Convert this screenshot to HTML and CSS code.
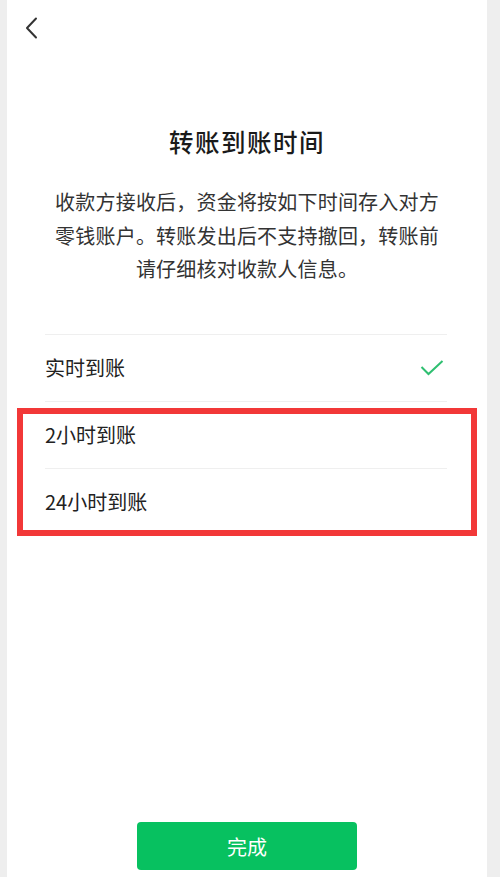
FILE: index.html
```html
<!DOCTYPE html>
<html lang="zh-CN">
<head>
<meta charset="utf-8">
<title>转账到账时间</title>
<link rel="stylesheet" href="styles.css">
</head>
<body>
<div class="frame">
  <div class="edge edge-left"></div>
  <main class="page">
    <header class="topbar">
      <svg class="back" width="14" height="22" viewBox="0 0 14 22" aria-hidden="true">
        <path d="M11 1.5 L2 11 L11 20.5" fill="none" stroke="#333" stroke-width="2" stroke-linecap="round" stroke-linejoin="round"/>
      </svg>
    </header>
    <h1 class="title">转账到账时间</h1>
    <p class="desc">收款方接收后，资金将按如下时间存入对方<br>零钱账户。转账发出后不支持撤回，转账前<br>请仔细核对收款人信息。</p>
    <ul class="options">
      <li class="option">
        <span>实时到账</span>
        <svg class="check" width="24" height="18" viewBox="0 0 24 18" aria-hidden="true">
          <path d="M1.5 8 L8.5 15 L22.5 2" fill="none" stroke="#2fbf71" stroke-width="2"/>
        </svg>
      </li>
      <li class="highlight">
        <div class="option"><span>2小时到账</span></div>
        <div class="option"><span>24小时到账</span></div>
      </li>
    </ul>
    <div class="footer">
      <button class="done">完成</button>
    </div>
  </main>
  <div class="edge edge-right"></div>
</div>
</body>
</html>
```

FILE: styles.css
```css
* { box-sizing: border-box; }
html, body { margin: 0; padding: 0; }
body {
  font-family: "Noto Sans CJK SC", "Noto Sans", sans-serif;
  background: #ffffff;
  color: #222;
}
.frame {
  display: flex;
  height: 877px;
}
.edge {
  background: #eeeeee;
  flex: none;
}
.edge-left { width: 7px; }
.edge-right { width: 13px; }
.page {
  flex: 1;
  display: flex;
  flex-direction: column;
  background: #fff;
}
.topbar {
  height: 56px;
  padding: 17px 0 0 18px;
}
.back { display: block; }
.title {
  margin: 69px 0 0;
  font-size: 24.5px;
  font-weight: 500;
  line-height: 34px;
  letter-spacing: 1.5px;
  text-align: center;
  color: #1a1a1a;
}
.desc {
  margin: 26px 0 0;
  font-size: 20px;
  line-height: 33.5px;
  letter-spacing: 0.2px;
  text-align: center;
  color: #333;
}
.options {
  list-style: none;
  margin: 48px 40px 0 38px;
  padding: 0;
}
.option {
  display: flex;
  align-items: center;
  justify-content: space-between;
  height: 67px;
  border-top: 1px solid #efefef;
  font-size: 20px;
  color: #222;
  padding-right: 3px;
}
.highlight {
  position: relative;
}
.highlight::after {
  content: "";
  position: absolute;
  top: 7px;
  bottom: -1px;
  left: -28px;
  right: -30px;
  border: 6px solid #f23838;
  pointer-events: none;
}
.footer {
  margin-top: auto;
  display: flex;
  justify-content: center;
  padding-bottom: 7px;
}
.done {
  width: 220px;
  height: 48px;
  border: none;
  border-radius: 4px;
  background: #07c160;
  color: #fff;
  font-family: "Noto Sans CJK SC", "Noto Sans", sans-serif;
  font-size: 20px;
  font-weight: 400;
}
```
